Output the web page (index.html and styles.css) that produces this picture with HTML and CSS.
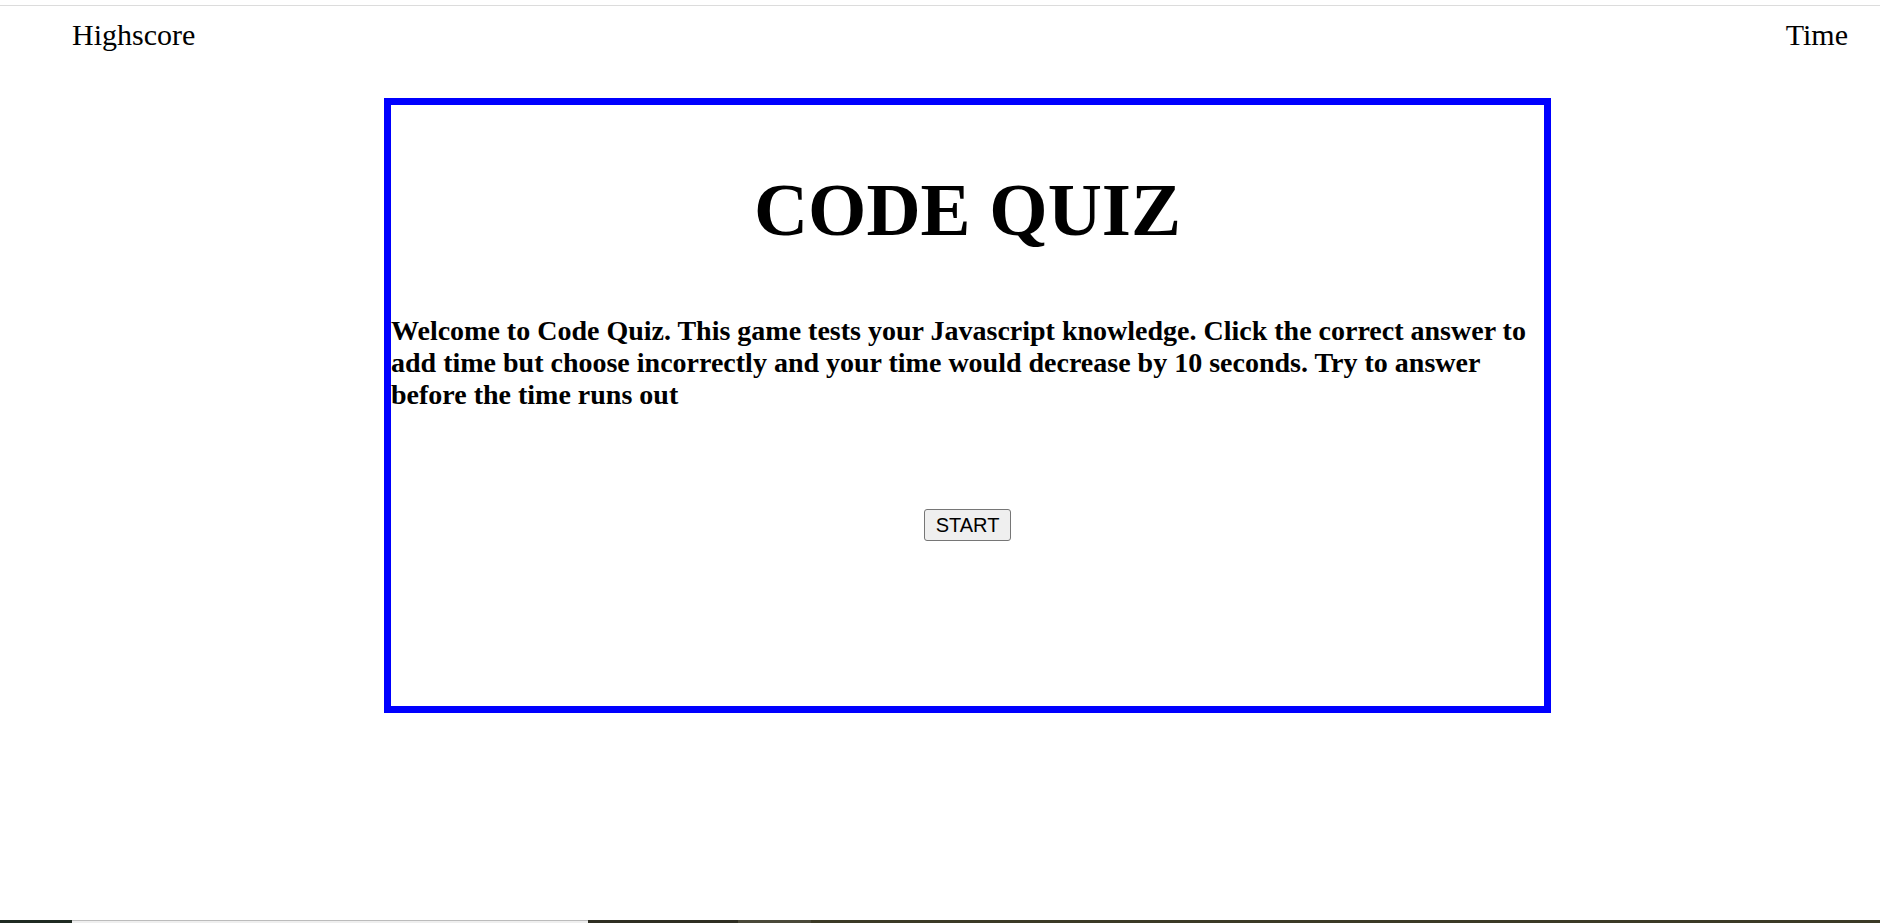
FILE: index.html
```html
<!DOCTYPE html>
<html lang="en">
<head>
<meta charset="utf-8">
<title>Code Quiz</title>
<link rel="stylesheet" href="styles.css">
</head>
<body>
<div class="page">
  <header class="topbar">
    <span class="highscore">Highscore</span>
    <span class="time">Time</span>
  </header>
  <main class="quiz-box">
    <h1 class="title">CODE QUIZ</h1>
    <h3 class="intro">Welcome to Code Quiz. This game tests your Javascript knowledge. Click the correct answer to add time but choose incorrectly and your time would decrease by 10 seconds. Try to answer before the time runs out</h3>
    <div class="actions"><button class="start-btn" type="button">START</button></div>
  </main>
  <div class="taskbar">
    <span class="seg seg-a"></span>
    <span class="seg seg-b"></span>
    <span class="seg seg-c"></span>
    <span class="seg seg-d"></span>
    <span class="seg seg-e"></span>
  </div>
</div>
</body>
</html>
```

FILE: styles.css
```css
html, body {
  margin: 0;
  padding: 0;
  background: #ffffff;
}

body {
  font-family: "Liberation Serif", "Times New Roman", serif;
  color: #000000;
}

.page {
  height: 100vh;
  display: flex;
  flex-direction: column;
  padding-top: 5px;
  box-sizing: border-box;
}

.topbar {
  border-top: 1px solid #dcdcdc;
  display: flex;
  justify-content: space-between;
  padding: 12px 32px 0 72px;
  font-size: 30px;
  line-height: 34px;
}

.quiz-box {
  margin: 46px 0 0 384px;
  width: 1167px;
  height: 615px;
  box-sizing: border-box;
  border: 7px solid #0000ff;
  display: flex;
  flex-direction: column;
}

.title {
  margin: 62px 0 0 0;
  text-align: center;
  font-size: 75px;
  line-height: 86px;
  font-weight: bold;
}

.intro {
  margin: 62px 0 0 0;
  font-size: 28px;
  line-height: 32px;
  font-weight: bold;
}

.actions {
  margin-top: 98px;
  display: flex;
  justify-content: center;
}

.start-btn {
  font-family: "Liberation Sans", Arial, sans-serif;
  font-size: 20px;
  line-height: 22px;
  height: 32px;
  width: 87px;
  padding: 0;
  color: #000;
  background: #efefef;
  border: 1px solid #767676;
  border-radius: 3px;
}

.taskbar {
  margin-top: auto;
  height: 3px;
  display: flex;
}

.seg { display: block; height: 100%; }
.seg-a { width: 72px; background: #1f2a22; }
.seg-b { width: 516px; background: #efefef; box-sizing: border-box; border-top: 1px solid #bcbcbc; }
.seg-c { width: 150px; background: #2e2e22; }
.seg-d { width: 73px; background: #4a4939; }
.seg-e { flex: 1; background: #3b3a26; }
```
